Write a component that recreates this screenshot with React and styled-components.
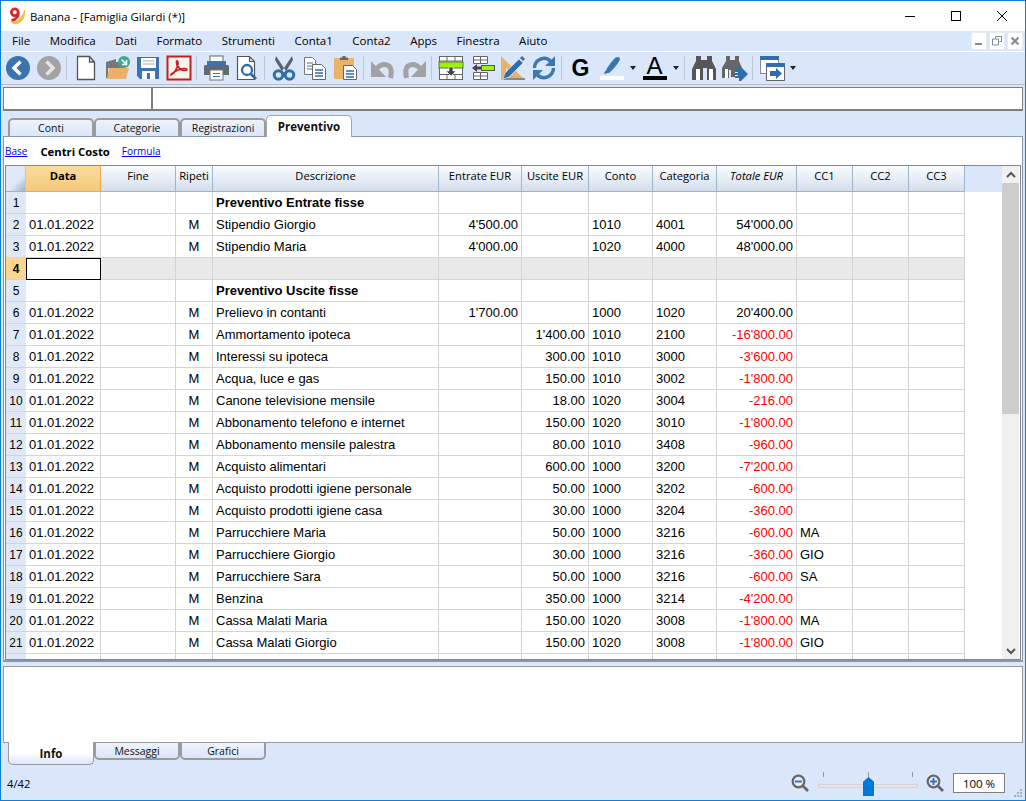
import styled, { createGlobalStyle } from "styled-components";

const UI_FONT = `"Open Sans", "Noto Sans", sans-serif`;
const CELL_FONT = `"Liberation Sans", Arial, sans-serif`;
const COLUMNS = "20px 75px 75px 37px 226px 83px 67px 64px 64px 80px 56px 56px 56px";

const rows = [
	{ n: 1, title: "Preventivo Entrate fisse" },
	{ n: 2, d: "Stipendio Giorgio", e: "4'500.00", c: "1010", k: "4001", t: "54'000.00" },
	{ n: 3, d: "Stipendio Maria", e: "4'000.00", c: "1020", k: "4000", t: "48'000.00" },
	{ n: 4, empty: true },
	{ n: 5, title: "Preventivo Uscite fisse" },
	{ n: 6, d: "Prelievo in contanti", e: "1'700.00", c: "1000", k: "1020", t: "20'400.00" },
	{ n: 7, d: "Ammortamento ipoteca", u: "1'400.00", c: "1010", k: "2100", t: "-16'800.00" },
	{ n: 8, d: "Interessi su ipoteca", u: "300.00", c: "1010", k: "3000", t: "-3'600.00" },
	{ n: 9, d: "Acqua, luce e gas", u: "150.00", c: "1010", k: "3002", t: "-1'800.00" },
	{ n: 10, d: "Canone televisione mensile", u: "18.00", c: "1020", k: "3004", t: "-216.00" },
	{ n: 11, d: "Abbonamento telefono e internet", u: "150.00", c: "1020", k: "3010", t: "-1'800.00" },
	{ n: 12, d: "Abbonamento mensile palestra", u: "80.00", c: "1010", k: "3408", t: "-960.00" },
	{ n: 13, d: "Acquisto alimentari", u: "600.00", c: "1000", k: "3200", t: "-7'200.00" },
	{ n: 14, d: "Acquisto prodotti igiene personale", u: "50.00", c: "1000", k: "3202", t: "-600.00" },
	{ n: 15, d: "Acquisto prodotti igiene casa", u: "30.00", c: "1000", k: "3204", t: "-360.00" },
	{ n: 16, d: "Parrucchiere Maria", u: "50.00", c: "1000", k: "3216", t: "-600.00", cc: "MA" },
	{ n: 17, d: "Parrucchiere Giorgio", u: "30.00", c: "1000", k: "3216", t: "-360.00", cc: "GIO" },
	{ n: 18, d: "Parrucchiere Sara", u: "50.00", c: "1000", k: "3216", t: "-600.00", cc: "SA" },
	{ n: 19, d: "Benzina", u: "350.00", c: "1000", k: "3214", t: "-4'200.00" },
	{ n: 20, d: "Cassa Malati Maria", u: "150.00", c: "1020", k: "3008", t: "-1'800.00", cc: "MA" },
	{ n: 21, d: "Cassa Malati Giorgio", u: "150.00", c: "1020", k: "3008", t: "-1'800.00", cc: "GIO" },
	{ n: 22, empty: true, plain: true },
];

const headers = ["Data", "Fine", "Ripeti", "Descrizione", "Entrate EUR", "Uscite EUR", "Conto", "Categoria", "Totale EUR", "CC1", "CC2", "CC3"];

const icons = {
	back: (
		<>
			<circle cx="13" cy="13" r="12" fill="#3b73ae" />
			<path d="M15.5 6.5 9 13l6.5 6.5" fill="none" stroke="#fff" strokeWidth="3.4" />
		</>
	),
	forward: (
		<>
			<circle cx="13" cy="13" r="12" fill="#a3a3a3" />
			<path d="M10.5 6.5 17 13l-6.5 6.5" fill="none" stroke="#e4e4e4" strokeWidth="3.4" />
		</>
	),
	newDoc: <path d="M4.5 1.5h12l5 5.5v17.5h-17z M16.5 1.5V7h5" fill="#fff" stroke="#555" strokeWidth="1.3" />,
	open: (
		<>
			<path d="M2 7l10-3v3h8v6H2z" fill="#777" />
			<path d="M4 24 2 23V11h2z" fill="#777" />
			<path d="M5 13h20l-3 11H3z" fill="#eab268" />
			<circle cx="20" cy="7" r="6" fill="#3fa98c" />
			<path d="M17.5 4.5l4.5 4.5M22.5 5v4.5H18" fill="none" stroke="#fff" strokeWidth="1.6" />
		</>
	),
	save: (
		<>
			<path d="M2 2h22v22H5l-3-3z" fill="#3b74b0" />
			<rect x="6" y="3" width="15" height="10" fill="#fff" />
			<path d="M8 6h11M8 9h11" stroke="#a9a9a9" strokeWidth="1.2" />
			<rect x="7" y="16" width="13" height="8" fill="#fff" />
			<rect x="12" y="18" width="3" height="6" fill="#3b74b0" />
		</>
	),
	pdf: (
		<>
			<rect x="1.5" y="1.5" width="23" height="23" fill="#f7f3ef" stroke="#c0201f" strokeWidth="2" />
			<path d="M5 20c3-1 6-6 7-11 .4-3-1-4-1.500-2-.4 3 3 7 5.500 8 2 .6 5 .8 5-.4 0-1.600-6-1-9 .4-3 1.400-7 4-7 5z" fill="none" stroke="#c9201f" strokeWidth="1.700" />
		</>
	),
	print: (
		<>
			<rect x="7" y="1" width="13" height="6" fill="#fff" stroke="#666" />
			<path d="M4 6h19v6H4z" fill="#3b74b0" />
			<path d="M1 11q0-1 2-1h21q2 0 2 1v9H1z" fill="#5d6a73" />
			<rect x="7" y="15" width="13" height="10" fill="#fff" stroke="#777" />
			<path d="M10 18.500h7M10 21.500h7" stroke="#3b74b0" strokeWidth="1.200" />
		</>
	),
	preview: (
		<>
			<path d="M3.500 1.500h12l5 5v18h-17z M15.500 1.500v5h5" fill="#fff" stroke="#555" strokeWidth="1.200" />
			<circle cx="13" cy="15" r="5" fill="#fff" stroke="#2f6eaa" strokeWidth="2.300" />
			<path d="M17 19l5 5" stroke="#2f6eaa" strokeWidth="3" />
		</>
	),
	cut: (
		<>
			<path d="M5 1l10 15-3 2L4 5zM21 1 11 16l3 2 8-13z" fill="#5c6368" />
			<circle cx="7.500" cy="20" r="4.300" fill="none" stroke="#2f6eaa" strokeWidth="3" />
			<circle cx="18.500" cy="20" r="4.300" fill="none" stroke="#2f6eaa" strokeWidth="3" />
		</>
	),
	copy: (
		<>
			<path d="M2.500 2.500h8l3 3v14h-11z" fill="#fff" stroke="#777" />
			<path d="M5 8h6M5 11h6M5 14h6" stroke="#3b74b0" />
			<path d="M10.500 9.500h9l4 4v11h-13z" fill="#fff" stroke="#666" />
			<path d="M13 15h8M13 18h8M13 21h8" stroke="#2f6eaa" strokeWidth="1.300" />
		</>
	),
	paste: (
		<>
			<rect x="1" y="3" width="20" height="21" rx="1.500" fill="#eab268" />
			<path d="M7 5V2.500h2.500V1h3v1.500H15V5z" fill="#666" />
			<path d="M10.500 10.500h9l4 4v10h-13z" fill="#fff" stroke="#666" />
			<path d="M13 16h8M13 19h8M13 22h8" stroke="#2f6eaa" strokeWidth="1.300" />
		</>
	),
	undo: (
		<>
			<path d="M6 14q7-7 13-3 3.500 3 1.500 12" fill="none" stroke="#a2a2a2" strokeWidth="5" />
			<path d="M1 6v16h15z" fill="#a2a2a2" />
		</>
	),
	redo: (
		<>
			<path d="M20 14q-7-7-13-3-3.500 3-1.500 12" fill="none" stroke="#a2a2a2" strokeWidth="5" />
			<path d="M25 6v16H10z" fill="#a2a2a2" />
		</>
	),
	insertRow: (
		<>
			<rect x="1.500" y="1.500" width="23" height="23" fill="#fff" stroke="#666" />
			<path d="M1.500 6h23M1.500 19.500h23M9 1.500V6M17 1.500V6M9 19.500v5M17 19.500v5" stroke="#666" />
			<rect x="1" y="7" width="24" height="6" fill="#9cf500" stroke="#666" />
			<path d="M11 12h4v4h3l-5 5-5-5h3z" fill="#444" stroke="#fff" strokeWidth=".6" />
		</>
	),
	removeRow: (
		<>
			<path d="M4.500 1.500h14v7h-14zM4.500 5h14M11.500 1.500v7M4.500 17.500h14v7h-14zM4.500 21h14M11.500 17.500v7" fill="#fff" stroke="#666" />
			<rect x="12.500" y="10.500" width="13" height="5" fill="#9cf500" stroke="#555" />
			<path d="M3 13l5-4v2.500h4v3H8V17z" fill="#444" />
		</>
	),
	ruler: (
		<>
			<path d="M1 1l24 24H1zM6 13v7h7z" fill="#eab268" fillRule="evenodd" />
			<path d="M4 25h21v-2H4z" fill="#888" />
			<path d="M3 24l2-6L19 4l4 4L9 22z" fill="#2f6eaa" stroke="#e7eefb" strokeWidth=".6" />
			<path d="M20 3l2-2 3 3-2 2z" fill="#2f6eaa" />
		</>
	),
	refresh: (
		<>
			<path d="M3.500 13a9.500 9.500 0 0 1 16.500-6.500" fill="none" stroke="#3b78b4" strokeWidth="3.400" />
			<path d="M22.500 13a9.500 9.500 0 0 1-16.500 6.500" fill="none" stroke="#3b78b4" strokeWidth="3.400" />
			<path d="M24 1v10H14zM2 25V15h10z" fill="#3b78b4" />
		</>
	),
	binoculars: (
		<>
			<path d="M5 1h5v4h6V1h5v5l4 8v11h-9V13h-4v12H1V14l4-8z" fill="#565656" />
			<rect x="5" y="14" width="4" height="11" fill="#fff" />
			<rect x="18" y="14" width="4" height="11" fill="#fff" />
		</>
	),
	binocularsNext: (
		<>
			<path d="M4 1h4v4h5V1h4v5l3 7v2h-7v7H9v-7H7v8H0V13l4-7z" fill="#666" />
			<rect x="3" y="14" width="3" height="9" fill="#fff" />
			<path d="M13 13h4v-1l2 0 7 7-7 7h-2v-3h-4v-2h3v-1h-3v-2h3v-1h-3z" fill="#2f6eaa" />
		</>
	),
	windowNext: (
		<>
			<rect x="1.500" y="1.500" width="18" height="17" fill="#fff" stroke="#888" />
			<rect x="1" y="1" width="19" height="4" fill="#2f6eaa" />
			<rect x="7.500" y="8.500" width="18" height="17" fill="#fff" stroke="#666" />
			<rect x="7" y="8" width="19" height="4" fill="#2f6eaa" />
			<path d="M11 16h6v-3l6 5.500-6 5.500v-3h-6z" fill="#2f6eaa" />
		</>
	),
};

const iconBar = [
	["back", "forward"],
	["newDoc", "open", "save", "pdf"],
	["print", "preview"],
	["cut", "copy", "paste"],
	["undo", "redo"],
	["insertRow", "removeRow", "ruler", "refresh"],
];

function ToolIcon({ name }) {
	return (
		<ToolSlot>
			<svg width="26" height="26" viewBox="0 0 26 26">
				{icons[name]}
			</svg>
		</ToolSlot>
	);
}

function ZoomIcon({ plus }) {
	return (
		<svg width="18" height="18" viewBox="0 0 18 18">
			<circle cx="7.500" cy="7.500" r="5.800" fill="#e8eef8" stroke="#666" strokeWidth="2.200" />
			<path d="M12 12l5 5" stroke="#666" strokeWidth="2.600" />
			<path d={plus ? "M4 7.500h7M7.500 4v7" : "M4 7.500h7"} stroke="#3b74b0" strokeWidth="2" />
		</svg>
	);
}

function GridRow({ row }) {
	const selected = row.n === 4;
	const hasDate = row.d;
	return (
		<Row $shaded={row.empty && !row.plain}>
			<RowNumber $selected={selected}>{!row.plain && row.n}</RowNumber>
			{selected ? <ActiveCell /> : <Cell>{hasDate && "01.01.2022"}</Cell>}
			<Cell />
			<Cell $align="center">{hasDate && "M"}</Cell>
			<Cell $bold={!!row.title}>{row.title || row.d}</Cell>
			<Cell $align="right">{row.e}</Cell>
			<Cell $align="right">{row.u}</Cell>
			<Cell>{row.c}</Cell>
			<Cell>{row.k}</Cell>
			<Cell $align="right" $red={row.t && row.t.startsWith("-")}>
				{row.t}
			</Cell>
			<Cell>{row.cc}</Cell>
			<Cell />
			<Cell />
		</Row>
	);
}

export default function App() {
	return (
		<Window>
			<GlobalStyle />
			<TitleBar>
				<svg width="20" height="20" viewBox="0 0 20 20">
					<path d="M1 15.500c6 1.500 12-3 14.500-12.500 2 6-1 14-8 15-3 .3-5.500-.8-6.500-2.500z" fill="#f4c23c" />
					<circle cx="5.800" cy="6.300" r="3.400" fill="none" stroke="#d9252b" strokeWidth="2.700" />
					<path d="M9.300 6c.3 4.500-2.300 7.500-6.800 8.500" fill="none" stroke="#d9252b" strokeWidth="2.700" />
				</svg>
				<TitleText>Banana - [Famiglia Gilardi (*)]</TitleText>
				<WindowButtons>
					<WindowButton>
						<svg width="12" height="12" viewBox="0 0 12 12">
							<path d="M1 6.500h10" stroke="#000" />
						</svg>
					</WindowButton>
					<WindowButton>
						<svg width="12" height="12" viewBox="0 0 12 12">
							<rect x="1.500" y="1.500" width="9" height="9" fill="none" stroke="#000" />
						</svg>
					</WindowButton>
					<WindowButton>
						<svg width="12" height="12" viewBox="0 0 12 12">
							<path d="M1 1l10 10M11 1 1 11" stroke="#000" />
						</svg>
					</WindowButton>
				</WindowButtons>
			</TitleBar>

			<MenuBar>
				{["File", "Modifica", "Dati", "Formato", "Strumenti", "Conta1", "Conta2", "Apps", "Finestra", "Aiuto"].map((m) => (
					<MenuItem key={m}>{m}</MenuItem>
				))}
				<MdiButtons>
					<MdiButton>
						<svg width="10" height="10" viewBox="0 0 10 10">
							<path d="M1 8h7" stroke="#7c8a9c" strokeWidth="2" />
						</svg>
					</MdiButton>
					<MdiButton>
						<svg width="10" height="10" viewBox="0 0 10 10">
							<path d="M3.500 2.500V.5h6v5h-2M.5 3h6v6h-6z" fill="none" stroke="#7c8a9c" />
						</svg>
					</MdiButton>
					<MdiButton>
						<svg width="10" height="10" viewBox="0 0 10 10">
							<path d="M1.500 1.500l7 7M8.500 1.500l-7 7" stroke="#7c8a9c" strokeWidth="2" />
						</svg>
					</MdiButton>
				</MdiButtons>
			</MenuBar>

			<Toolbar>
				{iconBar.map((group, i) => (
					<ToolGroup key={i}>
						{group.map((name) => (
							<ToolIcon key={name} name={name} />
						))}
						<Separator />
					</ToolGroup>
				))}
				<ToolSlot>
					<BoldG>G</BoldG>
				</ToolSlot>
				<ToolSlot>
					<svg width="26" height="26" viewBox="0 0 26 26">
						<path d="M6 18c1-4 6-11 10-15 2-2 5-1 5 1 0 2-6 10-11 14z" fill="#3b74b0" />
						<path d="M5 19l1-3 3 2z" fill="#3b74b0" />
						<rect x="1" y="21" width="24" height="4" fill="#fff" />
					</svg>
				</ToolSlot>
				<DropArrow />
				<ToolSlot>
					<ColorA>A</ColorA>
				</ToolSlot>
				<DropArrow />
				<Separator />
				<ToolIcon name="binoculars" />
				<ToolIcon name="binocularsNext" />
				<Separator />
				<ToolIcon name="windowNext" />
				<DropArrow />
			</Toolbar>

			<FormulaBar>
				<CellRef />
				<CellInput />
			</FormulaBar>

			<TabStrip>
				{["Conti", "Categorie", "Registrazioni"].map((t) => (
					<Tab key={t}>{t}</Tab>
				))}
				<ActiveTab>Preventivo</ActiveTab>
			</TabStrip>

			<MainPanel>
				<ViewLinks>
					<ViewLink>Base</ViewLink>
					<CurrentView>Centri Costo</CurrentView>
					<ViewLink>Formula</ViewLink>
				</ViewLinks>
				<GridFrame>
					<GridArea>
						<HeaderRow>
							<Corner />
							{headers.map((h, i) => (
								<HeaderCell key={h} $active={i === 0} $italic={h === "Totale EUR"}>
									{h}
								</HeaderCell>
							))}
						</HeaderRow>
						<GridBody>
							{rows.map((row) => (
								<GridRow key={row.n} row={row} />
							))}
						</GridBody>
					</GridArea>
					<ScrollBar>
						<ScrollArrow>
							<svg width="10" height="8" viewBox="0 0 10 8">
								<path d="M1 6l4-4 4 4" fill="none" stroke="#555" strokeWidth="2" />
							</svg>
						</ScrollArrow>
						<ScrollThumb />
						<ScrollTrack />
						<ScrollArrow>
							<svg width="10" height="8" viewBox="0 0 10 8">
								<path d="M1 2l4 4 4-4" fill="none" stroke="#555" strokeWidth="2" />
							</svg>
						</ScrollArrow>
					</ScrollBar>
				</GridFrame>
			</MainPanel>

			<InfoPanel />
			<BottomTabs>
				<BottomActiveTab>Info</BottomActiveTab>
				<BottomTab>Messaggi</BottomTab>
				<BottomTab>Grafici</BottomTab>
			</BottomTabs>

			<StatusBar>
				<StatusText>4/42</StatusText>
				<ZoomBox>
					<ZoomIcon />
					<Slider>
						<Tick $pos={5} />
						<Tick $pos={50} />
						<Tick $pos={94} />
						<SliderTrack />
						<SliderThumb />
					</Slider>
					<ZoomIcon plus />
					<ZoomValue>100 %</ZoomValue>
				</ZoomBox>
				<SizeGrip>
					<svg width="8" height="8" viewBox="0 0 8 8">
						<path d="M6 0h2v2H6zM3 3h2v2H3zM6 3h2v2H6zM0 6h2v2H0zM3 6h2v2H3zM6 6h2v2H6z" fill="#a8b0bb" />
					</svg>
				</SizeGrip>
			</StatusBar>
		</Window>
	);
}

const GlobalStyle = createGlobalStyle`
	html, body {
		margin: 0;
		padding: 0;
		background: #dae6f9;
	}
	* {
		box-sizing: border-box;
	}
`;

const Window = styled.div`
	position: relative;
	width: 1026px;
	height: 801px;
	overflow: hidden;
	border: 1px solid #0f7fd4;
	background: #dae6f9;
	font-family: ${UI_FONT};
	font-size: 11.5px;
	color: #000;
`;

const TitleBar = styled.div`
	height: 30px;
	background: #fff;
	display: flex;
	align-items: center;
	padding-left: 8px;
`;

const TitleText = styled.span`
	margin-left: 1px;
	font-size: 11.4px;
`;

const WindowButtons = styled.div`
	margin-left: auto;
	display: flex;
`;

const WindowButton = styled.div`
	width: 46px;
	height: 30px;
	display: flex;
	align-items: center;
	justify-content: center;
`;

const MenuBar = styled.div`
	height: 21px;
	display: flex;
	align-items: center;
	gap: 19.55px;
	padding-left: 11px;
	background: #dae6f9;
	border-bottom: 1px solid #fff;
`;

const MenuItem = styled.span`
	font-size: 11.5px;
	position: relative;
	top: -1px;
`;

const MdiButtons = styled.div`
	margin-left: auto;
	display: flex;
	gap: 2px;
	margin-right: 2px;
`;

const MdiButton = styled.div`
	width: 16px;
	height: 18px;
	background: #fff;
	border: 1px solid #e6ebf3;
	display: flex;
	align-items: center;
	justify-content: center;
`;

const Toolbar = styled.div`
	height: 33px;
	display: flex;
	align-items: center;
	padding-left: 1px;
	border-bottom: 1px solid #b9bcc2;
`;

const ToolGroup = styled.div`
	display: flex;
	align-items: center;
`;

const ToolSlot = styled.div`
	width: 31px;
	height: 26px;
	display: flex;
	align-items: center;
	justify-content: center;
	flex: none;
`;

const Separator = styled.div`
	width: 1px;
	height: 24px;
	margin: 0 3px 0 2px;
	background: #bcc6d4;
	flex: none;
`;

const DropArrow = styled.div`
	width: 12px;
	flex: none;
	display: flex;
	justify-content: center;
	&::before {
		content: "";
		border: 3.5px solid transparent;
		border-top: 4px solid #222;
		border-bottom: 0;
	}
`;

const BoldG = styled.span`
	font-family: ${CELL_FONT};
	font-weight: 700;
	font-size: 23px;
	line-height: 26px;
`;

const ColorA = styled.span`
	width: 24px;
	height: 24px;
	border-bottom: 4px solid #000;
	font-family: ${CELL_FONT};
	font-size: 24px;
	line-height: 19px;
	text-align: center;
`;

const FormulaBar = styled.div`
	height: 24px;
	margin: 2px 2px 0;
	display: flex;
	background: #fff;
	border: 1px solid #7f7f7f;
	border-bottom-width: 2px;
`;

const CellRef = styled.div`
	width: 149px;
	border-right: 2px solid #7f7f7f;
`;

const CellInput = styled.div`
	flex: 1;
`;

const TabStrip = styled.div`
	height: 25px;
	padding-left: 7px;
	display: flex;
	align-items: flex-end;
`;

const Tab = styled.div`
	width: 86px;
	height: 18px;
	border: 2px solid #9b9b9b;
	border-bottom: 0;
	border-radius: 5px 5px 0 0;
	background: linear-gradient(#eef3fc, #dae6f9);
	display: flex;
	align-items: center;
	justify-content: center;
	font-size: 10.5px;
	color: #111;
`;

const ActiveTab = styled(Tab)`
	height: 22px;
	margin-bottom: -1px;
	position: relative;
	z-index: 2;
	background: #fff;
	font-size: 11.5px;
	font-weight: 700;
	border-width: 1px;
	border-color: #a6a6a6;
	border-bottom: 0;
`;

const MainPanel = styled.div`
	height: 526px;
	margin: 0 2px;
	background: #fff;
	border: 1px solid #8b98a8;
	border-bottom-width: 2px;
	padding: 0 1px;
`;

const ViewLinks = styled.div`
	height: 28px;
	display: flex;
	align-items: center;
`;

const ViewLink = styled.span`
	color: #0000ee;
	text-decoration: underline;
	font-size: 10px;
`;

const CurrentView = styled.span`
	font-weight: 700;
	margin: 0 12px 0 13px;
	font-size: 11.3px;
`;

const GridFrame = styled.div`
	height: 495px;
	display: flex;
	border: 1px solid #808890;
	background: #fff;
`;

const GridArea = styled.div`
	flex: 1;
	min-width: 0;
	display: flex;
	flex-direction: column;
`;

const HeaderRow = styled.div`
	display: grid;
	grid-template-columns: ${COLUMNS};
	height: 26px;
	background: #dae6f9;
	flex: none;
`;

const Corner = styled.div`
	background: linear-gradient(135deg, #dfe8f7 60%, #9fb2c8);
	border-right: 1px solid #b9cadd;
	border-bottom: 1px solid #9db5d0;
`;

const HeaderCell = styled.div`
	display: flex;
	align-items: flex-start;
	justify-content: center;
	padding-top: 2px;
	font-size: 11.2px;
	white-space: nowrap;
	font-style: ${(p) => (p.$italic ? "italic" : "normal")};
	font-weight: ${(p) => (p.$active ? 700 : 400)};
	background: ${(p) => (p.$active ? "linear-gradient(#fbdc9e, #f5c87c)" : "linear-gradient(#fafcff, #d3deec)")};
	border-right: 1px solid ${(p) => (p.$active ? "#f2a550" : "#9db5d0")};
	border-bottom: 1px solid ${(p) => (p.$active ? "#f2a550" : "#9db5d0")};
`;

const GridBody = styled.div`
	flex: 1;
	overflow: hidden;
`;

const Row = styled.div`
	display: grid;
	grid-template-columns: ${COLUMNS};
	height: 22px;
	width: 959px;
	background: ${(p) => (p.$shaded ? "#e9e9e9" : "#fff")};
`;

const RowNumber = styled.div`
	background: ${(p) => (p.$selected ? "#fbd591" : "#dfe8f5")};
	font-weight: ${(p) => (p.$selected ? 700 : 400)};
	font-family: ${CELL_FONT};
	font-size: 12px;
	display: flex;
	align-items: center;
	justify-content: center;
	border-bottom: 1px solid #d4d4d4;
`;

const Cell = styled.div`
	display: flex;
	align-items: center;
	justify-content: ${(p) => (p.$align === "right" ? "flex-end" : p.$align === "center" ? "center" : "flex-start")};
	padding: 0 3px;
	font-family: ${CELL_FONT};
	font-size: 13px;
	white-space: nowrap;
	overflow: hidden;
	font-weight: ${(p) => (p.$bold ? 700 : 400)};
	color: ${(p) => (p.$red ? "#f00" : "#000")};
	border-right: 1px solid #d4d4d4;
	border-bottom: 1px solid #d4d4d4;
`;

const ActiveCell = styled.div`
	background: #fff;
	border: 1px solid #000;
`;

const ScrollBar = styled.div`
	width: 17px;
	margin-left: auto;
	margin-right: 1px;
	display: flex;
	flex-direction: column;
	flex: none;
`;

const ScrollArrow = styled.div`
	height: 17px;
	background: #f0f0f0;
	display: flex;
	align-items: center;
	justify-content: center;
`;

const ScrollThumb = styled.div`
	height: 231px;
	background: #cdcdcd;
`;

const ScrollTrack = styled.div`
	flex: 1;
	background: #f0f0f0;
`;

const InfoPanel = styled.div`
	height: 77px;
	margin: 4px 2px 0;
	background: #fff;
	border: 1px solid #999;
`;

const BottomTabs = styled.div`
	height: 24px;
	margin-top: -1px;
	padding-left: 7px;
	display: flex;
	align-items: flex-start;
	position: relative;
`;

const BottomTab = styled.div`
	width: 86px;
	height: 18px;
	border: 2px solid #9b9b9b;
	border-top: 1px solid #9b9b9b;
	border-radius: 0 0 5px 5px;
	background: linear-gradient(#eef3fc, #dae6f9);
	display: flex;
	align-items: center;
	justify-content: center;
	font-size: 10.5px;
	color: #111;
`;

const BottomActiveTab = styled(BottomTab)`
	height: 23px;
	font-size: 11.5px;
	font-weight: 700;
	border-width: 0 1px 1px;
	background: linear-gradient(#fff 50%, #dae6f9);
`;

const StatusBar = styled.div`
	height: 33px;
	display: flex;
	align-items: center;
	padding-left: 6px;
	position: relative;
`;

const StatusText = styled.span`
	font-size: 11.3px;
	margin-top: 1px;
`;

const ZoomBox = styled.div`
	margin-left: auto;
	display: flex;
	align-items: center;
	margin-right: 20px;
	margin-top: 1px;
`;

const Slider = styled.div`
	position: relative;
	width: 100px;
	height: 26px;
	margin: 0 8px 0 9px;
`;

const Tick = styled.span`
	position: absolute;
	top: 2px;
	left: ${(p) => p.$pos}px;
	width: 1px;
	height: 5px;
	background: #999;
`;

const SliderTrack = styled.div`
	position: absolute;
	left: 0;
	right: 0;
	top: 14px;
	height: 4px;
	background: #e6e6e6;
	border: 1px solid #d4d4d4;
`;

const SliderThumb = styled.div`
	position: absolute;
	left: 45px;
	top: 7px;
	width: 11px;
	height: 19px;
	background: #0078d7;
	clip-path: polygon(50% 0, 100% 25%, 100% 100%, 0 100%, 0 25%);
`;

const ZoomValue = styled.div`
	width: 52px;
	height: 20px;
	margin-left: 9px;
	background: #fff;
	border: 1px solid #7f7f7f;
	display: flex;
	align-items: center;
	justify-content: center;
	font-size: 11.5px;
`;

const SizeGrip = styled.div`
	position: absolute;
	right: 3px;
	bottom: 2px;
	line-height: 0;
`;
